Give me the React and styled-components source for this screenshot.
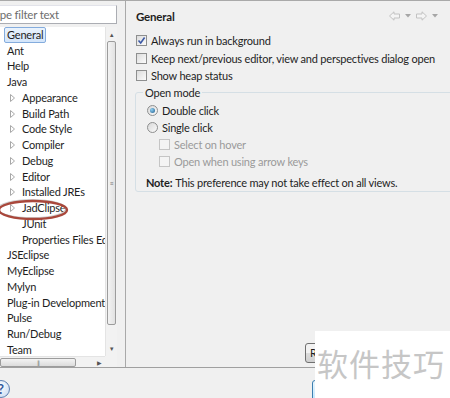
import React from 'react'
import styled, { createGlobalStyle } from 'styled-components'

const GlobalStyle = createGlobalStyle`
  html, body { margin: 0; padding: 0; background: #f0f0f0; }
  body { font-family: Lato, "Noto Sans", sans-serif; font-size: 11px; letter-spacing: -0.2px; color: #1e1e1e; }
`

const Page = styled.div`
  position: relative;
  width: 450px;
  height: 398px;
  overflow: hidden;
  border-top: 1px solid #a9a9a9;
  box-sizing: border-box;
  display: flex;
  flex-direction: column;
`

const Main = styled.div`
  display: flex;
  height: 367px;
  border-bottom: 1px solid #a0a0a0;
  box-sizing: border-box;
`

const LeftPane = styled.div`
  margin-left: -16px;
  width: 133px;
  flex-shrink: 0;
  display: flex;
  flex-direction: column;
  padding-top: 4px;
`

const Filter = styled.div`
  height: 19px;
  box-sizing: border-box;
  border: 1px solid #abadb3;
  border-top-color: #e2e3ea;
  background: #fff;
  color: #6d6d6d;
  line-height: 17px;
  padding-left: 4px;
  margin-left: 1px;
  font-size: 11.5px;
  white-space: nowrap;
  overflow: hidden;
`

const Tree = styled.div`
  margin-top: 3px;
  flex: 1;
  display: grid;
  grid-template-columns: 1fr 12px;
  grid-template-rows: 1fr 11px;
  background: #fff;
  overflow: hidden;
`

const TreeList = styled.div`
  padding-left: 22px;
  overflow: hidden;
`

const Row = styled.div`
  height: 15.75px;
  display: flex;
  align-items: center;
  white-space: nowrap;
  padding-left: ${p => (p.$child ? 4 : 0)}px;
`

const Twisty = styled.span`
  width: 11px;
  flex-shrink: 0;
  display: inline-flex;
  align-items: center;
`

const Label = styled.span`
  padding: 0 2px;
  margin-left: -2px;
  line-height: 14px;
  border: 1px solid ${p => (p.$selected ? '#84acdd' : 'transparent')};
  border-radius: 2px;
  background: ${p => (p.$selected ? 'linear-gradient(#eaf3fd, #d3e5fa)' : 'transparent')};
`

const VScroll = styled.div`
  background: #f2f2f2;
  border-left: 1px solid #e4e4e4;
  display: flex;
  flex-direction: column;
  align-items: center;
`

const ScrollArrow = styled.div`
  height: ${p => p.$h}px;
  display: flex;
  align-items: center;
  justify-content: center;
  color: #555;
  font-size: 6px;
  flex-shrink: 0;
`

const VThumb = styled.div`
  width: 9px;
  height: 284px;
  box-sizing: border-box;
  border: 1px solid #9c9c9c;
  border-radius: 2px;
  background: linear-gradient(90deg, #f3f3f3, #e2e2e2);
  display: flex;
  align-items: center;
  justify-content: center;
  color: #777;
  font-size: 7px;
  line-height: 1;
`

const HScroll = styled.div`
  background: #f2f2f2;
  border-top: 1px solid #e4e4e4;
  display: flex;
  align-items: center;
  padding-left: 16px;
`

const HThumb = styled.div`
  width: 76px;
  height: 9px;
  box-sizing: border-box;
  border: 1px solid #9c9c9c;
  border-radius: 2px;
  background: linear-gradient(#f3f3f3, #dcdcdc);
  display: flex;
  align-items: center;
  justify-content: center;
  color: #777;
  font-size: 6px;
  letter-spacing: -1px;
`

const Corner = styled.div`
  background: #f2f2f2;
`

const RightPane = styled.div`
  margin-left: 8px;
  flex: 1;
  border-left: 1px solid #a9a9a9;
  display: flex;
  flex-direction: column;
  min-width: 0;
`

const Header = styled.div`
  height: 31px;
  display: flex;
  align-items: center;
  justify-content: space-between;
  padding: 0 12px 0 10px;
`

const Title = styled.div`
  font-weight: bold;
  font-size: 11.5px;
`

const Nav = styled.div`
  display: flex;
  align-items: center;
  gap: 5px;
  margin-top: -1px;
`

const Options = styled.div`
  padding-left: 10px;
`

const Option = styled.div`
  height: ${p => p.$h || 17.5}px;
  display: flex;
  align-items: center;
  gap: 4px;
  white-space: nowrap;
  padding-left: ${p => p.$indent || 0}px;
  color: ${p => (p.$disabled ? '#9a9a9a' : '#1e1e1e')};
`

const Box = styled.span`
  width: 11px;
  height: 11px;
  box-sizing: border-box;
  border: 1px solid ${p => (p.$disabled ? '#c5c5c5' : '#8e8f8f')};
  background: ${p => (p.$disabled ? '#f4f4f4' : 'linear-gradient(135deg, #dcdcdc, #fbfbfb)')};
  display: inline-flex;
  align-items: center;
  justify-content: center;
  flex-shrink: 0;
`

const Radio = styled.span`
  width: 11px;
  height: 11px;
  box-sizing: border-box;
  border-radius: 50%;
  border: 1px solid #8e8f8f;
  background: linear-gradient(135deg, #d8d8d8, #fbfbfb);
  display: inline-flex;
  align-items: center;
  justify-content: center;
  flex-shrink: 0;
`

const Dot = styled.span`
  width: 5px;
  height: 5px;
  border-radius: 50%;
  background: radial-gradient(circle at 35% 35%, #8fd0f2, #1f5c8c);
`

const Group = styled.fieldset`
  margin: 0 -6px 0 -1px;
  padding: 0 0 2px 0;
  border: 1px solid #d5dfe5;
  border-radius: 3px;
  min-width: 0;
`

const Legend = styled.legend`
  margin-left: 7px;
  padding: 0 2px;
  line-height: 16px;
`

const GroupBody = styled.div`
  padding-left: 11px;
  margin-top: 1px;
`

const Note = styled.div`
  height: 19px;
  padding-left: 10px;
  display: flex;
  align-items: flex-end;
  white-space: nowrap;
  b { margin-right: 3px; }
`

const Buttons = styled.div`
  margin-top: auto;
  margin-bottom: 4px;
  display: flex;
  gap: 6px;
  padding-left: 179px;
`

const Button = styled.div`
  height: 20px;
  box-sizing: border-box;
  padding: 0 4px;
  border: 1px solid #707070;
  border-radius: 3px;
  background: linear-gradient(#f2f2f2 50%, #dddddd 50%, #cfcfcf);
  line-height: 18px;
  white-space: nowrap;
`

const Footer = styled.div`
  flex: 1;
  display: flex;
  align-items: flex-start;
  justify-content: space-between;
  padding-top: 12px;
`

const Help = styled.div`
  width: 18px;
  height: 18px;
  margin-left: -8px;
  border-radius: 50%;
  box-sizing: border-box;
  border: 1px solid #5d7fb0;
  background: radial-gradient(circle at 40% 35%, #ffffff, #c6d8f0);
  color: #33589a;
  font-weight: bold;
  font-size: 13px;
  display: flex;
  align-items: center;
  justify-content: center;
`

const OkButton = styled.div`
  width: 74px;
  height: 22px;
  margin-right: 64px;
  box-sizing: border-box;
  border: 1px solid #3c7fb1;
  border-radius: 3px;
  background: linear-gradient(#eaf6fd, #bee6fd);
  text-align: center;
  line-height: 20px;
`

const Watermark = styled.div`
  position: absolute;
  left: 315px;
  top: 330px;
  width: 135px;
  height: 68px;
  background: #fff;
  color: #c6c6c6;
  font-family: "Noto Sans CJK SC", sans-serif;
  font-size: 31px;
  line-height: 1;
  padding: 16px 0 0 2px;
  box-sizing: border-box;
  letter-spacing: 1px;
  white-space: nowrap;
`

const Annotation = styled.svg`
  position: absolute;
  left: 0;
  top: 197px;
`

const ArrowIcon = ({ flip }) => (
  <svg width="11" height="10" viewBox="0 0 11 10" style={flip ? { transform: 'scaleX(-1)' } : undefined}>
    <path d="M0.5 5 L5 0.8 V3 H10.5 V7 H5 V9.2 Z" fill="#f4f4f4" stroke="#c2c2c2" strokeWidth="1" />
  </svg>
)

const Drop = () => (
  <svg width="6" height="4" viewBox="0 0 6 4"><path d="M0 0 H6 L3 3.5 Z" fill="#a6a6a6" /></svg>
)

const Check = () => (
  <svg width="9" height="9" viewBox="0 0 9 9">
    <path d="M1.5 4.5 L3.7 7 L7.6 1.5" fill="none" stroke="#3d5aa6" strokeWidth="1.6" />
  </svg>
)

const Expander = () => (
  <svg width="5" height="8" viewBox="0 0 5 8">
    <path d="M0.5 0.5 L4.5 4 L0.5 7.5 Z" fill="#fff" stroke="#a8a8a8" strokeWidth="1" />
  </svg>
)

const tree = [
  { name: 'General', selected: true },
  { name: 'Ant' },
  { name: 'Help' },
  { name: 'Java' },
  { name: 'Appearance', child: true, twisty: true },
  { name: 'Build Path', child: true, twisty: true },
  { name: 'Code Style', child: true, twisty: true },
  { name: 'Compiler', child: true, twisty: true },
  { name: 'Debug', child: true, twisty: true },
  { name: 'Editor', child: true, twisty: true },
  { name: 'Installed JREs', child: true, twisty: true },
  { name: 'JadClipse', child: true, twisty: true },
  { name: 'JUnit', child: true },
  { name: 'Properties Files Editor', child: true },
  { name: 'JSEclipse' },
  { name: 'MyEclipse' },
  { name: 'Mylyn' },
  { name: 'Plug-in Development' },
  { name: 'Pulse' },
  { name: 'Run/Debug' },
  { name: 'Team' },
]

const App = () => (
  <>
    <GlobalStyle />
    <Page>
      <Main>
        <LeftPane>
          <Filter>type filter text</Filter>
          <Tree>
            <TreeList>
              {tree.map(item => (
                <Row key={item.name} $child={item.child}>
                  {item.child && <Twisty>{item.twisty && <Expander />}</Twisty>}
                  <Label $selected={item.selected}>{item.name}</Label>
                </Row>
              ))}
            </TreeList>
            <VScroll>
              <ScrollArrow $h={14}>▲</ScrollArrow>
              <VThumb>≡</VThumb>
              <div style={{ flex: 1 }} />
              <ScrollArrow $h={16}>▼</ScrollArrow>
            </VScroll>
            <HScroll>
              <HThumb>|||</HThumb>
              <div style={{ flex: 1 }} />
              <ScrollArrow $h={9} style={{ width: 12 }}>▶</ScrollArrow>
            </HScroll>
            <Corner />
          </Tree>
        </LeftPane>
        <RightPane>
          <Header>
            <Title>General</Title>
            <Nav>
              <ArrowIcon />
              <Drop />
              <ArrowIcon flip />
              <Drop />
            </Nav>
          </Header>
          <Options>
            <Option><Box><Check /></Box>Always run in background</Option>
            <Option><Box />Keep next/previous editor, view and perspectives dialog open</Option>
            <Option><Box />Show heap status</Option>
            <Group>
              <Legend>Open mode</Legend>
              <GroupBody>
                <Option $h={17}><Radio><Dot /></Radio>Double click</Option>
                <Option $h={17}><Radio />Single click</Option>
                <Option $h={17} $indent={12} $disabled><Box $disabled />Select on hover</Option>
                <Option $h={17} $indent={12} $disabled><Box $disabled />Open when using arrow keys</Option>
              </GroupBody>
              <Note><b>Note:</b>This preference may not take effect on all views.</Note>
            </Group>
          </Options>
          <Buttons>
            <Button>Restore Defaults</Button>
            <Button>Apply</Button>
          </Buttons>
        </RightPane>
      </Main>
      <Footer>
        <Help>?</Help>
        <OkButton>OK</OkButton>
      </Footer>
      <Annotation width="72" height="26" viewBox="0 0 72 26">
        <ellipse cx="33" cy="12" rx="34" ry="9" fill="none" stroke="#cfcfcf" strokeWidth="2" transform="translate(-1 -1)" />
        <ellipse cx="33" cy="12" rx="34" ry="9" fill="none" stroke="#a9473b" strokeWidth="2.4" />
      </Annotation>
      <Watermark>软件技巧</Watermark>
    </Page>
  </>
)

export default App
